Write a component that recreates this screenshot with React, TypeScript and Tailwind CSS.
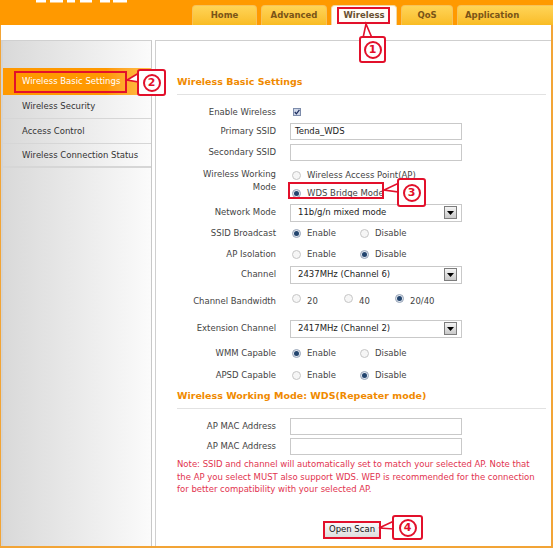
import React from "react";

function Radio({ on, className = "" }: { on?: boolean; className?: string }) {
  return on ? (
    <span className={`inline-flex w-[9px] h-[9px] shrink-0 rounded-full border border-[#9aa6b8] bg-[#dfe5ee] items-center justify-center ${className}`}>
      <span className="w-[5px] h-[5px] rounded-full bg-[#23456e]" />
    </span>
  ) : (
    <span className={`inline-block w-[9px] h-[9px] shrink-0 rounded-full border border-[#c6c6c6] bg-[#f6f6f6] ${className}`} />
  );
}

function Opt({ on, label, w, raised }: { on?: boolean; label: string; w: string; raised?: boolean }) {
  return (
    <div className={`flex items-center ${w}`}>
      <Radio on={on} className={raised ? "mb-[6px]" : ""} />
      <span className="ml-[6px]">{label}</span>
    </div>
  );
}

function Input({ value = "" }: { value?: string }) {
  return (
    <div className="ml-[14px] w-[172px] h-[17px] border border-[#c9c9c9] bg-white flex items-center pl-[4px] text-[#222]">
      {value}
    </div>
  );
}

function Select({ value }: { value: string }) {
  return (
    <div className="ml-[14px] w-[172px] h-[18px] border border-[#c9c9c9] bg-white flex items-center pl-[7px] text-[#222]">
      <span>{value}</span>
      <span className="ml-auto mr-[4px] w-[13px] h-[13px] border border-[#7d7d7d] bg-linear-to-b from-[#f4f4f4] to-[#c9c9c9] flex items-center justify-center">
        <svg width="7" height="4" viewBox="0 0 7 4">
          <path d="M0 0 L7 0 L3.5 4 Z" fill="#000" />
        </svg>
      </span>
    </div>
  );
}

function Label({ children }: { children: React.ReactNode }) {
  return <div className="w-[99px] shrink-0 text-right">{children}</div>;
}

function Callout({ n, className }: { n: string; className: string }) {
  return (
    <div className={`absolute border-2 border-[#e2102b] rounded-[3px] bg-white flex items-center justify-center ${className}`}>
      <span className="w-[18px] h-[18px] rounded-full border-2 border-[#e2102b] flex items-center justify-center text-[#e2102b] font-bold text-[11px] leading-none">
        {n}
      </span>
    </div>
  );
}

export default function App() {
  return (
    <div className="w-[553px] h-[548px] overflow-hidden bg-white relative font-['DejaVu_Sans',Verdana,sans-serif] text-[8.5px] text-[#444]">
      {/* Header */}
      <div className="h-[25px] bg-[#ff9900] flex items-end">
        <svg className="self-start ml-[35px] shrink-0" width="92" height="3" viewBox="0 0 92 3">
          <rect x="1" y="0" width="10" height="2.5" fill="#fff" />
          <rect x="15" y="0" width="13" height="2.5" fill="#fff" />
          <rect x="32" y="0" width="8" height="2.5" fill="#fff" />
          <rect x="45" y="0" width="12" height="2.5" fill="#fff" />
          <rect x="65" y="0" width="10" height="2.5" fill="#fff" />
          <rect x="78" y="0" width="14" height="2.5" fill="#fff" />
        </svg>
        <div className="ml-[65px] flex items-end gap-[4px] font-bold text-[8.5px] text-[#7a5417]">
          <div className="w-[65px] h-[20px] shrink-0 rounded-t-[4px] border border-b-0 border-[#f7c25a] bg-linear-to-b from-[#ffd456] to-[#f9bc22] flex items-center justify-center">Home</div>
          <div className="w-[66px] h-[20px] shrink-0 rounded-t-[4px] border border-b-0 border-[#f7c25a] bg-linear-to-b from-[#ffd456] to-[#f9bc22] flex items-center justify-center">Advanced</div>
          <div className="w-[66px] h-[20px] shrink-0 rounded-t-[4px] border border-b-0 border-[#f3d9a4] bg-[#fffdf8] flex items-center justify-center text-[#6a5030]">Wireless</div>
          <div className="w-[52px] h-[20px] shrink-0 rounded-t-[4px] border border-b-0 border-[#f7c25a] bg-linear-to-b from-[#ffd456] to-[#f9bc22] flex items-center justify-center">QoS</div>
          <div className="w-[110px] h-[20px] shrink-0 rounded-t-[4px] border border-b-0 border-[#f7c25a] bg-linear-to-b from-[#ffd456] to-[#f9bc22] flex items-center pl-[7px]">Application</div>
        </div>
      </div>

      {/* Body */}
      <div className="h-[523px] flex pt-[15px] border-l border-r-2 border-b-2 border-[#f2a436]">
        {/* Sidebar */}
        <div className="w-[151px] shrink-0 border-l-2 border-[#d4d4d4] border-r border-r-[#c8c8c8] border-t border-t-[#d0d0d0] bg-linear-to-r from-[#d9d9d9] to-[#fbfbfb] text-[#333]">
          <div className="h-[27px]" />
          <div className="h-[27px] bg-linear-to-r from-[#ff9900] from-70% to-[#ffc24a] text-white flex items-center pl-[19px]">
            Wireless Basic Settings
          </div>
          <div className="h-[24px] border-b border-[#d6d6d6] flex items-center pl-[19px]">Wireless Security</div>
          <div className="h-[25px] border-b border-[#d6d6d6] flex items-center pl-[19px]">Access Control</div>
          <div className="h-[24px] border-b-2 border-[#d6d6d6] flex items-center pl-[19px]">Wireless Connection Status</div>
        </div>

        {/* Content panel */}
        <div className="flex-1 ml-[3px] border-l border-t border-[#cfcfcf] pl-[21px] pr-[5px]">
          <div className="h-[54px] pt-[33px] border-b border-[#e2e2e2] font-bold text-[9.5px] leading-[16px] text-[#f08a00]">
            Wireless Basic Settings
          </div>

          <div className="mt-[7px] h-[20px] flex items-center">
            <Label>Enable Wireless</Label>
            <span className="ml-[17px] w-[8px] h-[8px] border border-[#7d8cab] bg-[#cdd6e8] flex items-center justify-center">
              <svg width="6" height="6" viewBox="0 0 6 6">
                <path d="M0.8 3 L2.4 4.8 L5.4 0.8" stroke="#1c2b5c" strokeWidth="1.2" fill="none" />
              </svg>
            </span>
          </div>

          <div className="h-[19px] flex items-center">
            <Label>Primary SSID</Label>
            <Input value="Tenda_WDS" />
          </div>

          <div className="h-[23px] flex items-center">
            <Label>Secondary SSID</Label>
            <Input />
          </div>

          <div className="h-[38px] flex items-start">
            <div className="w-[99px] shrink-0 text-right pt-[4px] leading-[13px]">
              Wireless Working
              <br />
              Mode
            </div>
            <div className="ml-[16px] pt-[2px]">
              <div className="h-[18px] flex items-center">
                <Radio />
                <span className="ml-[6px]">Wireless Access Point(AP)</span>
              </div>
              <div className="h-[18px] flex items-center">
                <Radio on />
                <span className="ml-[6px]">WDS Bridge Mode</span>
              </div>
            </div>
          </div>

          <div className="h-[21px] flex items-center">
            <Label>Network Mode</Label>
            <Select value="11b/g/n mixed mode" />
          </div>

          <div className="h-[21px] flex items-center">
            <Label>SSID Broadcast</Label>
            <div className="ml-[16px] flex items-center">
              <Opt on label="Enable" w="w-[68px]" />
              <Opt label="Disable" w="w-[68px]" />
            </div>
          </div>

          <div className="h-[21px] flex items-center">
            <Label>AP Isolation</Label>
            <div className="ml-[16px] flex items-center">
              <Opt label="Enable" w="w-[68px]" />
              <Opt on label="Disable" w="w-[68px]" />
            </div>
          </div>

          <div className="h-[19px] flex items-center">
            <Label>Channel</Label>
            <Select value="2437MHz (Channel 6)" />
          </div>

          <div className="h-[34px] flex items-center">
            <Label>Channel Bandwidth</Label>
            <div className="ml-[16px] flex items-center">
              <Opt raised label="20" w="w-[52px]" />
              <Opt raised label="40" w="w-[51px]" />
              <Opt raised on label="20/40" w="w-[60px]" />
            </div>
          </div>

          <div className="h-[21px] flex items-center">
            <Label>Extension Channel</Label>
            <Select value="2417MHz (Channel 2)" />
          </div>

          <div className="h-[29px] flex items-center">
            <Label>WMM Capable</Label>
            <div className="ml-[16px] flex items-center">
              <Opt on label="Enable" w="w-[68px]" />
              <Opt label="Disable" w="w-[68px]" />
            </div>
          </div>

          <div className="h-[14px] flex items-center">
            <Label>APSD Capable</Label>
            <div className="ml-[16px] flex items-center">
              <Opt label="Enable" w="w-[68px]" />
              <Opt on label="Disable" w="w-[68px]" />
            </div>
          </div>

          <div className="h-[27px] pt-[6px] border-b border-[#e2e2e2] font-bold text-[9.5px] leading-[16px] text-[#f08a00]">
            Wireless Working Mode: WDS(Repeater mode)
          </div>

          <div className="mt-[8px] h-[19px] flex items-center">
            <Label>AP MAC Address</Label>
            <Input />
          </div>

          <div className="h-[20px] flex items-center">
            <Label>AP MAC Address</Label>
            <Input />
          </div>

          <div className="mt-[2px] leading-[12.5px] text-[#e2344f] whitespace-nowrap">
            Note: SSID and channel will automatically set to match your selected AP. Note that
            <br />
            the AP you select MUST also support WDS. WEP is recommended for the connection
            <br />
            for better compatibility with your selected AP.
          </div>

          <div className="mt-[25px] pl-[146px]">
            <button className="w-[58px] h-[18px] border-2 border-[#e2102b] bg-linear-to-b from-[#f8f8f8] to-[#dedede] text-[#111] text-[8.5px] font-['DejaVu_Sans',Verdana,sans-serif] flex items-center justify-center">
              Open Scan
            </button>
          </div>
        </div>
      </div>

      {/* Annotation overlays */}
      <svg className="absolute left-0 top-0 pointer-events-none" width="553" height="548" viewBox="0 0 553 548">
        <polygon points="363,38 372,38 366,24" fill="#fff" stroke="#e2102b" strokeWidth="1.6" />
        <polygon points="139,73 139,82 127,80" fill="#fff" stroke="#e2102b" strokeWidth="1.6" />
        <polygon points="399,183 399,192 384,190" fill="#fff" stroke="#e2102b" strokeWidth="1.6" />
        <polygon points="394,521 394,529 379,528" fill="#fff" stroke="#e2102b" strokeWidth="1.6" />
      </svg>
      <div className="absolute left-[337px] top-[7px] w-[53px] h-[17px] border-2 border-[#e2102b]" />
      <div className="absolute left-[14px] top-[71px] w-[113px] h-[22px] border-2 border-[#e2102b]" />
      <div className="absolute left-[288px] top-[182px] w-[96px] h-[17px] border-2 border-[#e2102b]" />
      <Callout n="1" className="left-[359px] top-[36px] w-[27px] h-[27px]" />
      <Callout n="2" className="left-[137px] top-[69px] w-[29px] h-[27px]" />
      <Callout n="3" className="left-[397px] top-[178px] w-[29px] h-[29px]" />
      <Callout n="4" className="left-[392px] top-[515px] w-[31px] h-[25px]" />
    </div>
  );
}
